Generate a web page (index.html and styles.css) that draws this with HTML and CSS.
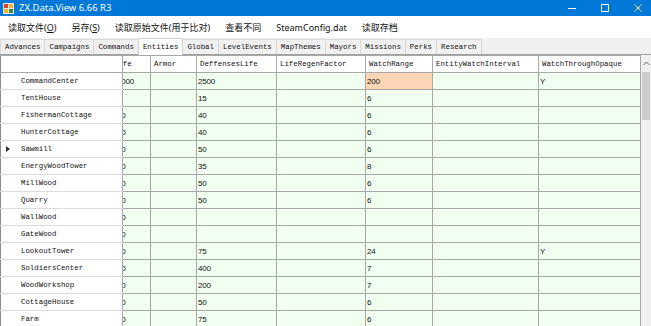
FILE: index.html
```html
<!DOCTYPE html>
<html>
	<head>
		<link rel="stylesheet" href="styles.css">
	</head>
	<body>
		<div class="window">
			<div class="titlebar">
				<svg class="app-icon" width="11" height="11" viewBox="0 0 11 11">
					<rect x="0" y="0" width="11" height="11" fill="#e8e8e8"/>
					<rect x="1" y="1" width="4" height="4" fill="#d9412b"/>
					<rect x="6" y="1" width="4" height="4" fill="#f2b630"/>
					<rect x="1" y="6" width="4" height="4" fill="#f2b630"/>
					<rect x="6" y="6" width="4" height="4" fill="#3c8d3c"/>
				</svg>
				<span class="title">ZX.Data.View 6.66 R3</span>
				<div class="controls">
					<svg width="8" height="8" viewBox="0 0 8 8"><path d="M0 4.5H8" stroke="#fff" stroke-width="1"/></svg>
					<svg width="8" height="8" viewBox="0 0 8 8"><rect x="0.5" y="0.5" width="7" height="7" fill="none" stroke="#fff" stroke-width="1"/></svg>
					<svg width="8" height="8" viewBox="0 0 8 8"><path d="M0.5 0.5L7.5 7.5M7.5 0.5L0.5 7.5" stroke="#fff" stroke-width="1"/></svg>
				</div>
			</div>
			<div class="menubar">
				<span class="menu-item">读取文件(<u>O</u>)</span>
				<span class="menu-item">另存(<u>S</u>)</span>
				<span class="menu-item">读取原始文件(用于比对)</span>
				<span class="menu-item">查看不同</span>
				<span class="menu-item">SteamConfig.dat</span>
				<span class="menu-item">读取存档</span>
			</div>
			<div class="tabs">
				<span class="tab">Advances</span>
				<span class="tab">Campaigns</span>
				<span class="tab">Commands</span>
				<span class="tab active">Entities</span>
				<span class="tab">Global</span>
				<span class="tab">LevelEvents</span>
				<span class="tab">MapThemes</span>
				<span class="tab">Mayors</span>
				<span class="tab">Missions</span>
				<span class="tab">Perks</span>
				<span class="tab">Research</span>
			</div>
			<div class="grid-area">
				<table class="grid">
					<colgroup>
						<col class="w-head">
						<col class="w-life">
						<col class="w-armor">
						<col class="w-def">
						<col class="w-regen">
						<col class="w-range">
						<col class="w-interval">
						<col class="w-opaque">
					</colgroup>
					<thead>
						<tr>
							<th class="corner"></th>
							<th><span class="clip">Life</span></th>
							<th>Armor</th>
							<th>DeffensesLife</th>
							<th>LifeRegenFactor</th>
							<th>WatchRange</th>
							<th>EntityWatchInterval</th>
							<th>WatchThroughOpaque</th>
						</tr>
					</thead>
					<tbody>
						<tr><td class="rowhead"><span class="mark"></span>CommandCenter</td><td><span class="clip">1000</span></td><td></td><td>2500</td><td></td><td class="changed">200</td><td></td><td>Y</td></tr>
						<tr><td class="rowhead"><span class="mark"></span>TentHouse</td><td></td><td></td><td>15</td><td></td><td>6</td><td></td><td></td></tr>
						<tr><td class="rowhead"><span class="mark"></span>FishermanCottage</td><td><span class="clip">20</span></td><td></td><td>40</td><td></td><td>6</td><td></td><td></td></tr>
						<tr><td class="rowhead"><span class="mark"></span>HunterCottage</td><td><span class="clip">20</span></td><td></td><td>40</td><td></td><td>6</td><td></td><td></td></tr>
						<tr><td class="rowhead"><span class="mark on"></span>Sawmill</td><td><span class="clip">20</span></td><td></td><td>50</td><td></td><td>6</td><td></td><td></td></tr>
						<tr><td class="rowhead"><span class="mark"></span>EnergyWoodTower</td><td><span class="clip">30</span></td><td></td><td>35</td><td></td><td>8</td><td></td><td></td></tr>
						<tr><td class="rowhead"><span class="mark"></span>MillWood</td><td><span class="clip">20</span></td><td></td><td>50</td><td></td><td>6</td><td></td><td></td></tr>
						<tr><td class="rowhead"><span class="mark"></span>Quarry</td><td><span class="clip">20</span></td><td></td><td>50</td><td></td><td>6</td><td></td><td></td></tr>
						<tr><td class="rowhead"><span class="mark"></span>WallWood</td><td><span class="clip">40</span></td><td></td><td></td><td></td><td></td><td></td><td></td></tr>
						<tr><td class="rowhead"><span class="mark"></span>GateWood</td><td><span class="clip">40</span></td><td></td><td></td><td></td><td></td><td></td><td></td></tr>
						<tr><td class="rowhead"><span class="mark"></span>LookoutTower</td><td><span class="clip">30</span></td><td></td><td>75</td><td></td><td>24</td><td></td><td>Y</td></tr>
						<tr><td class="rowhead"><span class="mark"></span>SoldiersCenter</td><td><span class="clip">50</span></td><td></td><td>400</td><td></td><td>7</td><td></td><td></td></tr>
						<tr><td class="rowhead"><span class="mark"></span>WoodWorkshop</td><td><span class="clip">30</span></td><td></td><td>200</td><td></td><td>7</td><td></td><td></td></tr>
						<tr><td class="rowhead"><span class="mark"></span>CottageHouse</td><td><span class="clip">20</span></td><td></td><td>50</td><td></td><td>6</td><td></td><td></td></tr>
						<tr><td class="rowhead"><span class="mark"></span>Farm</td><td><span class="clip">20</span></td><td></td><td>75</td><td></td><td>6</td><td></td><td></td></tr>
					</tbody>
				</table>
				<div class="vscroll">
					<div class="arrow">
						<svg width="7" height="5" viewBox="0 0 7 5"><path d="M0.5 4L3.5 1L6.5 4" fill="none" stroke="#606060" stroke-width="1"/></svg>
					</div>
					<div class="thumb"></div>
				</div>
			</div>
		</div>
	</body>
</html>
```

FILE: styles.css
```css
body {
	margin: 0;
	background: #f0f0f0;
	font-family: "Noto Sans", "Noto Sans CJK SC", sans-serif;
	overflow: hidden;
}
.window {
	width: 651px;
	height: 326px;
	overflow: hidden;
	display: flex;
	flex-direction: column;
}
.titlebar {
	height: 16px;
	flex: none;
	background: #0078d7;
	color: #fff;
	display: flex;
	align-items: center;
	padding-left: 3px;
}
.app-icon {
	flex: none;
}
.title {
	margin-left: 5px;
	font-size: 9.5px;
	line-height: 16px;
}
.controls {
	margin-left: auto;
	display: flex;
	align-items: center;
	gap: 25px;
	padding-right: 9px;
}
.controls svg {
	display: block;
}
.menubar {
	height: 22px;
	flex: none;
	background: #fff;
	display: flex;
	align-items: center;
	padding-left: 0.5px;
	font-family: "Noto Sans", "Noto Sans CJK SC", sans-serif;
	font-size: 9px;
	color: #111;
}
.menu-item {
	padding: 0 7.5px;
	white-space: nowrap;
}
.menu-item u {
	text-underline-offset: 1px;
}
.tabs {
	height: 16px;
	flex: none;
	display: flex;
	align-items: flex-end;
	font-family: "Liberation Mono", monospace;
	font-size: 7.4px;
	color: #111;
}
.tab {
	height: 14px;
	line-height: 14px;
	padding: 0 4px;
	border: 1px solid #d9d9d9;
	border-bottom: none;
	margin-right: -1px;
	background: #f0f0f0;
	white-space: nowrap;
}
.tab.active {
	height: 16px;
	line-height: 16px;
	background: #fff;
	border-color: #d0d0d0;
	position: relative;
	z-index: 1;
	margin-bottom: -1px;
}
.grid-area {
	flex: 1;
	display: flex;
	background: #fff;
	border-top: 1px solid #a0a0a0;
	min-height: 0;
}
.grid {
	border-collapse: collapse;
	table-layout: fixed;
	width: 640px;
	flex: none;
	font-family: "Liberation Mono", monospace;
	font-size: 7.4px;
	color: #111;
}
.w-head { width: 122px; }
.w-life { width: 28px; }
.w-armor { width: 46px; }
.w-def { width: 80px; }
.w-regen { width: 89px; }
.w-range { width: 67px; }
.w-interval { width: 106px; }
.w-opaque { width: 102px; }
.grid th,
.grid td {
	height: 16px;
	padding: 0 0 0 1px;
	border: 1px solid #a8a8a8;
	overflow: hidden;
	white-space: nowrap;
	text-align: left;
	vertical-align: middle;
}
.grid th {
	font-weight: normal;
	background: #fff;
	padding-left: 3px;
}
.grid th.corner {
	border-left: 1px solid #8c8c8c;
}
.grid td {
	background: #f0fff0;
	font-family: "Liberation Sans", sans-serif;
	font-size: 8px;
	letter-spacing: -0.2px;
}
.grid td.rowhead {
	background: #fff;
	font-family: "Liberation Mono", monospace;
	font-size: 7.4px;
	letter-spacing: 0;
	padding-left: 4px;
	border-left: 1px solid #8c8c8c;
	border-top-color: #dcdcdc;
	border-bottom-color: #dcdcdc;
}
.grid td.changed {
	background: #fcd5b4;
}
.clip {
	display: inline-block;
	margin-left: -12px;
}
.grid td .clip {
	margin-left: -7px;
}
.mark {
	display: inline-block;
	width: 16px;
	vertical-align: middle;
}
.mark.on::before {
	content: "";
	display: block;
	margin-left: 1px;
	width: 0;
	height: 0;
	border-top: 3px solid transparent;
	border-bottom: 3px solid transparent;
	border-left: 4px solid #333;
}
.vscroll {
	flex: 1;
	background: #f0f0f0;
	display: flex;
	flex-direction: column;
	align-items: center;
}
.arrow {
	height: 17px;
	display: flex;
	align-items: center;
	justify-content: center;
}
.arrow svg {
	display: block;
}
.thumb {
	width: 8px;
	height: 48px;
	background: #cdcdcd;
}
```
